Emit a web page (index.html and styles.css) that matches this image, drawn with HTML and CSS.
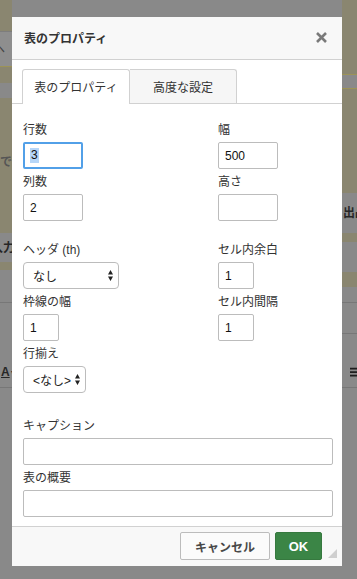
FILE: index.html
```html
<!DOCTYPE html>
<html lang="ja">
<head>
    <meta charset="UTF-8" />
    <meta name="viewport" content="width=device-width, initial-scale=1.0" />
    <title>表のプロパティ</title>
    <link rel="stylesheet" href="styles.css">
</head>
<body>
    <!-- dimmed editor page behind the dialog -->
    <div class="page">
        <div class="strip strip-left">
            <div class="olive"></div>
            <div class="grey box"><span class="bg-text shift-he">ヘ</span></div>
            <div class="yline"></div>
            <div class="olive"></div>
            <div class="grey"></div>
            <div class="olive text-top"><span class="bg-text light">ですか</span></div>
            <div class="grey"><span class="bg-text bold shift-in">入力</span></div>
            <div class="olive"></div>
            <div class="grey"></div>
            <div class="gline"></div>
            <div class="grey"></div>
            <div class="grey"><span class="bg-text bold under">A</span><span class="caret">▾</span></div>
            <div class="gline"></div>
            <div class="grey"></div>
        </div>
        <div class="middle"></div>
        <div class="strip strip-right">
            <div class="olive"></div>
            <div class="yline"></div>
            <div class="grey"></div>
            <div class="yline"></div>
            <div class="olive"></div>
            <div class="grey"><span class="bg-text bold">出品</span></div>
            <div class="olive"></div>
            <div class="grey"></div>
            <div class="olive"></div>
            <div class="grey"></div>
            <div class="gline"></div>
            <div class="grey"></div>
            <div class="gline"></div>
            <div class="grey"></div>
            <div class="grey icon-cell">
                <svg width="8" height="11" viewBox="0 0 8 11"><path d="M0 1h8M0 5h8M0 9h8" stroke="#1e1e1e" stroke-width="2"/></svg>
            </div>
            <div class="gline"></div>
            <div class="grey"></div>
        </div>
    </div>

    <div class="dialog">
        <div class="dlg-head">
            <span class="dlg-title">表のプロパティ</span>
            <svg class="close" width="11" height="11" viewBox="0 0 11 11">
                <path d="M1 1l9 9M10 1l-9 9" stroke="#7a7a7a" stroke-width="2.6"/>
            </svg>
        </div>

        <div class="tabs">
            <div class="tab active">表のプロパティ</div>
            <div class="tab">高度な設定</div>
        </div>

        <div class="dlg-body">
            <div class="cols">
                <div class="col">
                    <div class="field">
                        <label>行数</label>
                        <div class="input focus w60"><span class="sel">3</span></div>
                    </div>
                    <div class="field">
                        <label>列数</label>
                        <input class="input w60" type="text" value="2" />
                    </div>
                </div>
                <div class="col">
                    <div class="field">
                        <label>幅</label>
                        <input class="input w60" type="text" value="500" />
                    </div>
                    <div class="field">
                        <label>高さ</label>
                        <input class="input w60" type="text" value="" />
                    </div>
                </div>
            </div>

            <div class="cols group">
                <div class="col">
                    <div class="field">
                        <label>ヘッダ (th)</label>
                        <div class="select w96">
                            <span>なし</span>
                            <svg width="5" height="11" viewBox="0 0 5 11"><path d="M0 4.5L2.5 0L5 4.5zM0 6.5h5L2.5 11z" fill="#222"/></svg>
                        </div>
                    </div>
                    <div class="field">
                        <label>枠線の幅</label>
                        <input class="input w36" type="text" value="1" />
                    </div>
                    <div class="field">
                        <label>行揃え</label>
                        <div class="select w63">
                            <span>&lt;なし&gt;</span>
                            <svg width="5" height="11" viewBox="0 0 5 11"><path d="M0 4.5L2.5 0L5 4.5zM0 6.5h5L2.5 11z" fill="#222"/></svg>
                        </div>
                    </div>
                </div>
                <div class="col">
                    <div class="field">
                        <label>セル内余白</label>
                        <input class="input w36" type="text" value="1" />
                    </div>
                    <div class="field">
                        <label>セル内間隔</label>
                        <input class="input w36" type="text" value="1" />
                    </div>
                </div>
            </div>

            <div class="group wide">
                <div class="field">
                    <label>キャプション</label>
                    <input class="input full" type="text" value="" />
                </div>
                <div class="field">
                    <label>表の概要</label>
                    <input class="input full" type="text" value="" />
                </div>
            </div>
        </div>

        <div class="dlg-foot">
            <button class="btn cancel">キャンセル</button>
            <button class="btn ok">OK</button>
            <span class="grip"></span>
        </div>
    </div>
</body>
</html>
```

FILE: styles.css
```css
body {
    margin: 0;
    width: 357px;
    height: 579px;
    overflow: hidden;
    position: relative;
    font-family: "Liberation Sans", "Noto Sans CJK JP", sans-serif;
    background-color: #898989;
}

/* background page */
.page {
    display: grid;
    grid-template-columns: 12px 1fr 15px;
    height: 579px;
}
.strip {
    display: grid;
    overflow: hidden;
}
.strip > div {
    display: flex;
    align-items: center;
    overflow: hidden;
    white-space: nowrap;
}
.strip-left {
    grid-template-rows: 31px 35px 1px 16px 15px 135px 29px 8px 32px 1px 54px 30px 1px 1fr;
}
.strip-right {
    grid-template-rows: 74px 1px 13px 1px 104px 40px 9px 30px 15px 15px 1px 30px 1px 23px 30px 1px 1fr;
}
.olive {
    background-color: #8a8670;
}
.grey {
    background-color: #898989;
}
.box {
    background-color: #8e8e8e;
    border-top: 1px solid #7d7d7d;
}
.yline {
    background-color: #9c9357;
}
.gline {
    background-color: #777;
}
.middle {
    background-color: #898989;
}
.strip > .text-top {
    align-items: flex-start;
    padding-top: 57px;
}
.bg-text {
    font-size: 12px;
    line-height: 14px;
    color: #262626;
}
.bg-text.light {
    color: #555;
    font-weight: bold;
}
.bg-text.bold {
    font-weight: bold;
}
.shift-he {
    margin-left: -7px;
    color: #444;
}
.shift-in {
    margin-left: -9px;
}
.under {
    text-decoration: underline;
    margin-left: 1px;
}
.caret {
    font-size: 8px;
    color: #333;
    margin-left: 1px;
}
.strip-right .bg-text {
    margin-left: 1px;
}
.icon-cell {
    padding-left: 8px;
}

/* dialog */
.dialog {
    position: absolute;
    left: 12px;
    top: 17px;
    width: 330px;
    height: 549px;
    background: #fff;
    display: flex;
    flex-direction: column;
}
.dlg-head {
    height: 43px;
    box-sizing: border-box;
    background: #f8f8f8;
    border-bottom: 1px solid #d1d1d1;
    display: flex;
    align-items: center;
    justify-content: space-between;
    padding: 0 15px 1px 12px;
}
.dlg-title {
    font-size: 12px;
    font-weight: bold;
    color: #333;
}
.close {
    display: block;
}
.tabs {
    height: 44px;
    box-sizing: border-box;
    border-bottom: 1px solid #d1d1d1;
    padding: 9px 0 0 10px;
    display: flex;
    align-items: flex-end;
}
.tab {
    height: 34px;
    box-sizing: border-box;
    border: 1px solid #d1d1d1;
    border-bottom: none;
    border-radius: 3px 3px 0 0;
    background: #f6f6f6;
    display: flex;
    align-items: center;
    justify-content: center;
    font-size: 12px;
    color: #333;
    width: 107px;
}
.tab.active {
    width: 108px;
    height: 35px;
    margin-bottom: -1px;
    background: #fff;
    padding-bottom: 1px;
}
.tab + .tab {
    border-left: none;
    border-radius: 0 3px 0 0;
}

.dlg-body {
    flex: 1;
    padding: 18px 9px 0 11px;
}
.cols {
    display: grid;
    grid-template-columns: 195px 1fr;
}
.group {
    margin-top: 16px;
}
.group.wide {
    margin-top: 20px;
}
.field {
    display: flex;
    flex-direction: column;
    align-items: flex-start;
    margin-bottom: 5px;
}
label {
    font-size: 12px;
    line-height: 16px;
    color: #333;
    margin-bottom: 4px;
}
.input {
    height: 27px;
    box-sizing: border-box;
    border: 1px solid #bcbcbc;
    border-radius: 2px;
    background: #fff;
    padding: 0 6px;
    font-family: "Liberation Sans", sans-serif;
    font-size: 12px;
    color: #111;
    margin: 0;
    outline: none;
    display: flex;
    align-items: center;
}
.input.focus {
    border: 2px solid #52a0e8;
    padding: 0 5px;
}
.sel {
    background: #b6d6f8;
    line-height: 15px;
    padding: 0 1px;
}
.w60 {
    width: 60px;
}
.w36 {
    width: 36px;
}
.full {
    width: 100%;
}
.select {
    height: 27px;
    box-sizing: border-box;
    border: 1px solid #bcbcbc;
    border-radius: 4px;
    background: #fff;
    display: flex;
    align-items: center;
    justify-content: space-between;
    padding: 0 5px 0 9px;
    font-size: 12px;
    color: #222;
}
.select svg {
    display: block;
}
.w96 {
    width: 96px;
}
.w63 {
    width: 63px;
}

.dlg-foot {
    height: 40px;
    box-sizing: border-box;
    border-top: 1px solid #d1d1d1;
    background: #f8f8f8;
    display: flex;
    justify-content: flex-end;
    align-items: flex-start;
    gap: 5px;
    padding: 5px 20px 0 0;
    position: relative;
}
.btn {
    height: 28px;
    box-sizing: border-box;
    border-radius: 2px;
    font-family: "Liberation Sans", "Noto Sans CJK JP", sans-serif;
    font-size: 12px;
    font-weight: bold;
    padding: 0;
    cursor: pointer;
}
.cancel {
    width: 90px;
    background: #fbfbfb;
    border: 1px solid #bcbcbc;
    color: #484848;
}
.ok {
    width: 47px;
    background: #3b8546;
    border: 1px solid #36793f;
    color: #fff;
    font-size: 13px;
}
.grip {
    position: absolute;
    right: 5px;
    bottom: 8px;
    width: 0;
    height: 0;
    border-left: 9px solid transparent;
    border-bottom: 9px solid #cfcfcf;
}
```
